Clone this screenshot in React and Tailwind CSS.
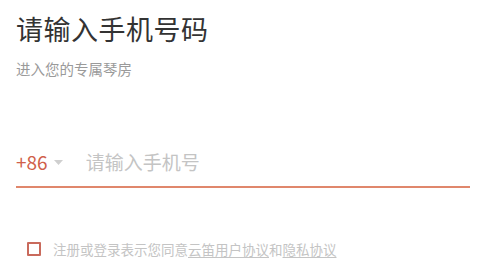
import React, { useState } from "react";

const font = { fontFamily: '"Noto Sans CJK SC", "Noto Sans", sans-serif' };

export default function App() {
  const [agree, setAgree] = useState(false);
  const [phone, setPhone] = useState("");

  return (
    <div className="w-[480px] h-[270px] bg-white overflow-hidden" style={font}>
      <div className="pl-4 pr-3 pt-[12px]">
        {/* 标题 */}
        <h1 className="text-[27px] leading-[34px] text-[#333333] tracking-[0.5px]">请输入手机号码</h1>
        <p className="mt-[13px] text-[14.5px] leading-[20px] text-[#9a9a9a]">进入您的专属琴房</p>

        {/* 手机号输入 */}
        <div className="mt-[59px] flex items-center h-[50px] border-b-2 border-[#e0876c] w-[454px]">
          <button className="flex items-center gap-[6px] text-[19px] text-[#d0604a]">
            +86
            <svg width="9" height="5" viewBox="0 0 9 5">
              <polygon points="0,0 9,0 4.5,5" fill="#cfcfcf" />
            </svg>
          </button>
          <input
            className="ml-[23px] flex-1 outline-none text-[19px] text-[#333] placeholder:text-[#c4c4c4] bg-transparent"
            placeholder="请输入手机号"
            value={phone}
            onChange={(e) => setPhone(e.target.value)}
            style={font}
          />
        </div>

        {/* 协议 */}
        <div className="mt-[51px] ml-[11px] flex items-center gap-[12px] h-[20px]">
          <button
            className="w-[14px] h-[14px] border-2 border-[#c96a5c] rounded-[1px]"
            onClick={() => setAgree((v) => !v)}
          >
            {agree && <span className="block w-full h-full bg-[#c96a5c]" />}
          </button>
          <span className="text-[13.5px] text-[#c4c4c4]">
            注册或登录表示您同意
            <span className="underline underline-offset-2">云笛用户协议</span>和
            <span className="underline underline-offset-2">隐私协议</span>
          </span>
        </div>
      </div>
    </div>
  );
}
